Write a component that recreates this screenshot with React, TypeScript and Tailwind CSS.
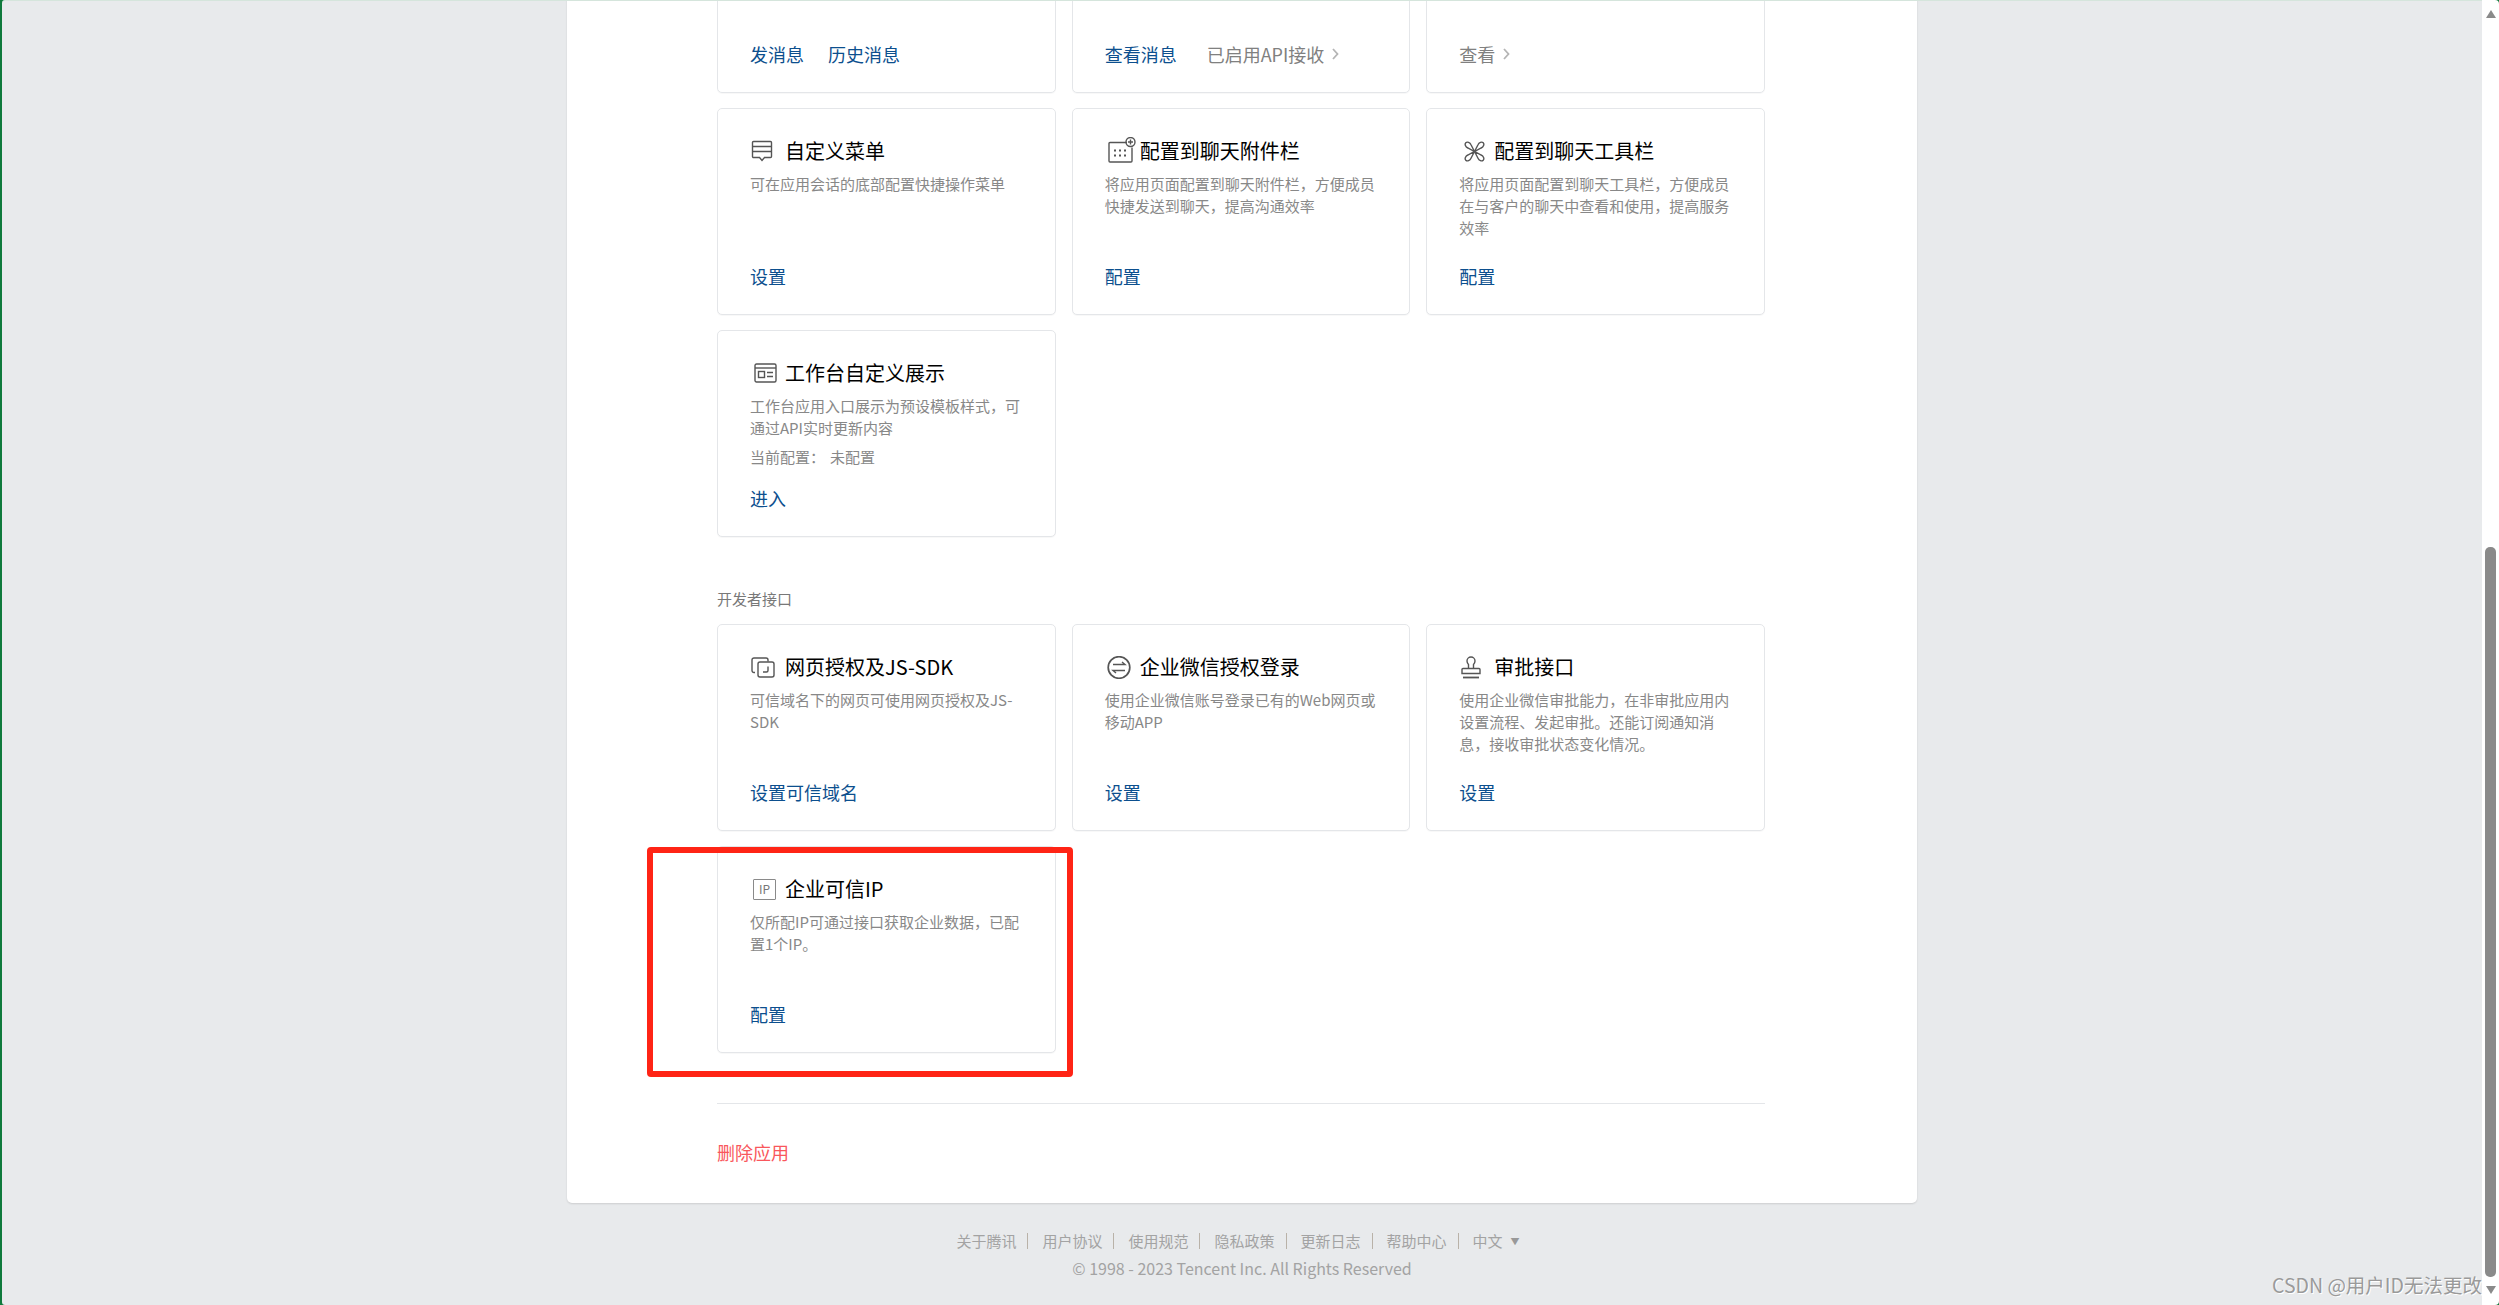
import type { ReactNode } from "react";

const iconProps = {
    fill: "none",
    stroke: "#555",
    strokeWidth: 1.4,
};

function MenuIcon() {
    return (
        <svg width="22" height="22" viewBox="0 0 22 22" className="shrink-0" {...iconProps}>
            <path d="M2.5 1.5h17a1 1 0 0 1 1 1v14a1 1 0 0 1-1 1h-6l-2.5 3-2.5-3h-6a1 1 0 0 1-1-1v-14a1 1 0 0 1 1-1z" />
            <path d="M1.5 6.5h19M1.5 11.5h19" />
        </svg>
    );
}

function AttachIcon() {
    return (
        <svg width="28" height="26" viewBox="0 0 28 26" className="shrink-0" {...iconProps}>
            <path d="M19 5.5H2a1 1 0 0 0-1 1v17.500a1 1 0 0 0 1 1h21a1 1 0 0 0 1-1V10.500" />
            <circle cx="22.500" cy="5" r="4.500" />
            <path d="M22.500 2.500v5M20 5h5" />
            <path d="M6 13.500h2M11 13.500h2M16 13.500h2M6 18.500h2M11 18.500h2M16 18.500h2" strokeWidth="2.200" />
        </svg>
    );
}

function ToolIcon() {
    return (
        <svg width="21" height="21" viewBox="0 0 21 21" className="shrink-0" {...iconProps}>
            <path d="M10.500 10.500 7 3.800C6 1.500 3.200.4 1.800 1.800.4 3.200 1.500 6 3.800 7z" />
            <path d="M10.500 10.500 14 3.800c1-2.300 3.800-3.400 5.200-2 1.400 1.400.3 4.200-2 5.200z" />
            <path d="M10.500 10.500 7 17.200c-1 2.300-3.800 3.400-5.200 2-1.400-1.400-.3-4.200 2-5.200z" />
            <path d="m10.500 10.500 3.500 6.700c1 2.300 3.800 3.400 5.200 2 1.400-1.400.3-4.200-2-5.200z" />
        </svg>
    );
}

function BoardIcon() {
    return (
        <svg width="23" height="20" viewBox="0 0 23 20" className="shrink-0" {...iconProps}>
            <rect x="1" y="1" width="21" height="18" rx="1.500" />
            <path d="M1 5h21" />
            <rect x="4.500" y="8.500" width="6" height="6" />
            <path d="M13 9.500h6M13 13.500h6" />
        </svg>
    );
}

function LinkIcon() {
    return (
        <svg width="24" height="21" viewBox="0 0 24 21" className="shrink-0" {...iconProps}>
            <path d="M4 15.500H3a2 2 0 0 1-2-2V3a2 2 0 0 1 2-2h12a2 2 0 0 1 2 2v1.500" />
            <path d="M21 5H9a2 2 0 0 0-2 2v11a2 2 0 0 0 2 2h12a2 2 0 0 0 2-2V7a2 2 0 0 0-2-2z" />
            <path d="M17 9.500v4a1.500 1.500 0 0 1-1.500 1.500H12" />
        </svg>
    );
}

function SwapIcon() {
    return (
        <svg width="24" height="23" viewBox="0 0 24 23" className="shrink-0" {...iconProps}>
            <circle cx="12" cy="11.500" r="10.800" strokeWidth="1.700" />
            <path d="M6 8.500h12l-3-2.500M18 14.500H6l3 2.500" />
        </svg>
    );
}

function StampIcon() {
    return (
        <svg width="20" height="23" viewBox="0 0 20 23" className="shrink-0" {...iconProps}>
            <path d="M7.500 12V8.500C6.500 7.500 6 6.500 6 5a4 4 0 0 1 8 0c0 1.500-.5 2.500-1.500 3.500V12" />
            <path d="M2 12.500h16a1 1 0 0 1 1 1v4H1v-4a1 1 0 0 1 1-1z" />
            <path d="M2 21.500h16" strokeWidth="1.800" />
        </svg>
    );
}

function IpIcon() {
    return (
        <div className="flex h-[21px] w-[23px] shrink-0 items-center justify-center rounded-[1px] border border-[#8a8a8a] text-[12px] leading-none text-[#777]">
            IP
        </div>
    );
}

function Chevron() {
    return (
        <svg width="7" height="12" viewBox="0 0 7 12" className="ml-[8px] shrink-0" fill="none" stroke="#b5b5b5" strokeWidth="1.800">
            <path d="m1 1 4.500 5L1 11" />
        </svg>
    );
}

type CardProps = {
    icon?: ReactNode;
    iconClass?: string;
    title?: string;
    desc?: string[];
    extra?: ReactNode;
    children: ReactNode;
};

function Card({ icon, iconClass, title, desc = [], extra, children }: CardProps) {
    return (
        <div className="flex h-[207px] flex-col rounded-[5px] border border-[#e4e6e9] bg-white px-[32px] pt-[27px] pb-[26px] shadow-[0_1px_1px_rgba(0,0,0,0.03)]">
            <div className="flex h-[30px] items-center">
                <div className={`flex w-[35px] shrink-0 items-center ${iconClass ?? ""}`}>{icon}</div>
                <span className="whitespace-nowrap text-[20px] leading-[30px] text-black">{title}</span>
            </div>
            <div className="mt-[7px] text-[15px] leading-[22px] text-[#888]">
                {desc.map((line) => (
                    <div key={line} className="whitespace-nowrap">
                        {line}
                    </div>
                ))}
            </div>
            {extra}
            <div className="mt-auto flex h-[24px] items-center whitespace-nowrap text-[18px] leading-[24px] text-[#0c4f8e]">{children}</div>
        </div>
    );
}

const footerLinks = ["关于腾讯", "用户协议", "使用规范", "隐私政策", "更新日志", "帮助中心"];

export default function App() {
    return (
        <div className="flex h-screen w-full overflow-hidden bg-[#0f7a3c] pl-[2px] [font-family:'Noto_Sans_CJK_SC','Noto_Sans',sans-serif]">
            <div className="relative flex min-w-0 flex-1 flex-col overflow-hidden rounded-l-[3px] border-t border-[#d5e5dc] bg-[#e8eaec]">
                <div className="flex flex-col items-center">
                    {/* page is scrolled, so the first row starts above the viewport */}
                    <div className="mt-[-115px] w-[1350px] rounded-b-[5px] bg-white pr-[152px] pb-[39px] pl-[150px] shadow-[0_1px_2px_rgba(0,0,0,0.12)]">
                        <div className="grid grid-cols-3 gap-x-[16px] gap-y-[15px]">
                            <Card>
                                <span>发消息</span>
                                <span className="ml-[24px]">历史消息</span>
                            </Card>
                            <Card>
                                <span>查看消息</span>
                                <span className="ml-[30px] text-[#808080]">已启用API接收</span>
                                <Chevron />
                            </Card>
                            <Card>
                                <span className="text-[#808080]">查看</span>
                                <Chevron />
                            </Card>
                            <Card icon={<MenuIcon />} iconClass="pl-px" title="自定义菜单" desc={["可在应用会话的底部配置快捷操作菜单"]}>
                                设置
                            </Card>
                            <Card
                                icon={<AttachIcon />}
                                iconClass="pl-[3px] pb-[2px]"
                                title="配置到聊天附件栏"
                                desc={["将应用页面配置到聊天附件栏，方便成员", "快捷发送到聊天，提高沟通效率"]}
                            >
                                配置
                            </Card>
                            <Card
                                icon={<ToolIcon />}
                                iconClass="pl-[5px]"
                                title="配置到聊天工具栏"
                                desc={["将应用页面配置到聊天工具栏，方便成员", "在与客户的聊天中查看和使用，提高服务", "效率"]}
                            >
                                配置
                            </Card>
                            <Card
                                icon={<BoardIcon />}
                                iconClass="pl-[4px]"
                                title="工作台自定义展示"
                                desc={["工作台应用入口展示为预设模板样式，可", "通过API实时更新内容"]}
                                extra={
                                    <div className="mt-[7px] flex text-[15px] leading-[22px] text-[#888]">
                                        <span>当前配置：</span>
                                        <span className="ml-[5px]">未配置</span>
                                    </div>
                                }
                            >
                                进入
                            </Card>
                        </div>

                        <div className="mt-[51px] mb-[14px] text-[15px] leading-[22px] text-[#787878]">开发者接口</div>

                        <div className="grid grid-cols-3 gap-x-[16px] gap-y-[15px]">
                            <Card
                                icon={<LinkIcon />}
                                iconClass="pl-px"
                                title="网页授权及JS-SDK"
                                desc={["可信域名下的网页可使用网页授权及JS-", "SDK"]}
                            >
                                设置可信域名
                            </Card>
                            <Card
                                icon={<SwapIcon />}
                                iconClass="pl-[2px]"
                                title="企业微信授权登录"
                                desc={["使用企业微信账号登录已有的Web网页或", "移动APP"]}
                            >
                                设置
                            </Card>
                            <Card
                                icon={<StampIcon />}
                                iconClass="pl-[2px]"
                                title="审批接口"
                                desc={["使用企业微信审批能力，在非审批应用内", "设置流程、发起审批。还能订阅通知消", "息，接收审批状态变化情况。"]}
                            >
                                设置
                            </Card>
                            <div className="relative">
                                <Card
                                    icon={<IpIcon />}
                                    iconClass="pl-[3px]"
                                    title="企业可信IP"
                                    desc={["仅所配IP可通过接口获取企业数据，已配", "置1个IP。"]}
                                >
                                    配置
                                </Card>
                                {/* annotation box drawn over the card */}
                                <div className="pointer-events-none absolute top-[1px] left-[-70px] h-[230px] w-[426px] rounded-[4px] border-[6px] border-[#ff2415]" />
                            </div>
                        </div>

                        <div className="mt-[50px] h-px bg-[#e4e6e9]" />
                        <div className="mt-[36px] h-[24px] text-[18px] leading-[24px] text-[#f9575c]">删除应用</div>
                    </div>

                    <div className="mt-[28px] flex h-[20px] items-center pr-[8px] text-[15px] leading-[20px] whitespace-nowrap text-[#a3a3a3]">
                        {footerLinks.map((label) => (
                            <div key={label} className="flex items-center">
                                <span>{label}</span>
                                <span className="mr-[14px] ml-[11px] h-[16px] w-px bg-[#b9b2a8]" />
                            </div>
                        ))}
                        <span>中文</span>
                        <span className="ml-[8px] text-[9px] leading-none text-[#999]">▼</span>
                    </div>
                    <div className="mt-[7px] h-[20px] text-[16px] leading-[20px] whitespace-nowrap text-[#a3a3a3]">
                        © 1998 - 2023 Tencent Inc. All Rights Reserved
                    </div>
                </div>

                {/* image watermark sits over the page */}
                <div className="absolute right-0 bottom-[8px] text-[19.5px] leading-[24px] whitespace-nowrap text-[#9a9a9a] [text-shadow:1px_1px_0_#fff]">
                    CSDN @用户ID无法更改
                </div>
            </div>

            <div className="flex w-[17px] shrink-0 flex-col items-center rounded-r-[4px] bg-white pt-[10px] pb-[11px]">
                <div className="h-0 w-0 border-x-[5px] border-b-[8px] border-x-transparent border-b-[#8a8a8a]" />
                <div className="mt-[529px] h-[730px] w-[11px] rounded-[5px] bg-[#8a8a8a]" />
                <div className="mt-auto h-0 w-0 border-x-[5px] border-t-[8px] border-x-transparent border-t-[#8a8a8a]" />
            </div>
        </div>
    );
}
